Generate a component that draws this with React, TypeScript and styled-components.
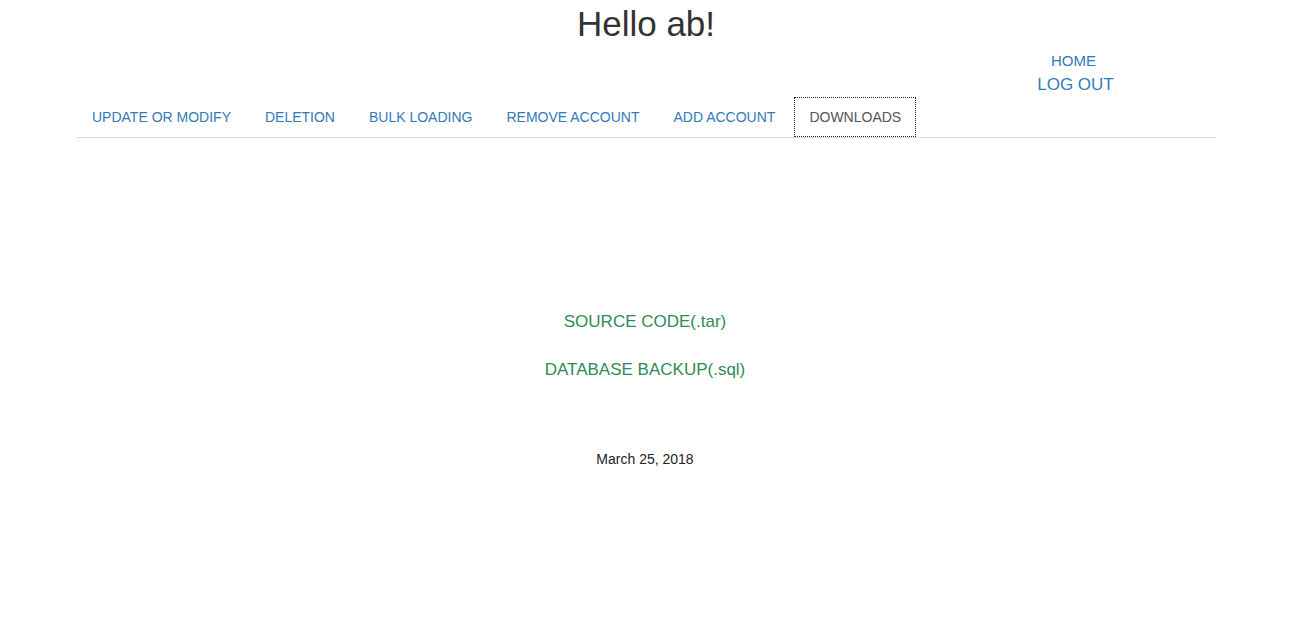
import styled, { createGlobalStyle } from "styled-components";

const GlobalStyle = createGlobalStyle`
  html, body {
    margin: 0;
    padding: 0;
    background: #fff;
  }
  body {
    font-family: "Liberation Sans", Arial, Helvetica, sans-serif;
    font-size: 14px;
    line-height: 1.42857;
    color: #333;
  }
`;

const tabs = [
  "UPDATE OR MODIFY",
  "DELETION",
  "BULK LOADING",
  "REMOVE ACCOUNT",
  "ADD ACCOUNT",
  "DOWNLOADS",
];

const App = () => (
  <>
    <GlobalStyle />
    <Container>
      <Title>Hello ab!</Title>
      <HeaderRow>
        <UserMenu>
          <HomeLink href="#">HOME</HomeLink>
          <LogOutLink href="#">LOG OUT</LogOutLink>
        </UserMenu>
      </HeaderRow>
      <Tabs>
        {tabs.map((t) => (
          <TabItem key={t}>
            <TabLink href="#" $active={t === "DOWNLOADS"}>
              {t}
            </TabLink>
          </TabItem>
        ))}
      </Tabs>
    </Container>

    <Content>
      <DownloadLink href="#">SOURCE CODE(.tar)</DownloadLink>
      <DownloadLink href="#" $gap>
        DATABASE BACKUP(.sql)
      </DownloadLink>
      <DateLine>March 25, 2018</DateLine>
    </Content>
  </>
);

const Container = styled.div`
  width: 1140px;
  margin: 0 auto;
  padding: 0 14px 0 16px;
`;

const Title = styled.h1`
  margin: 4px 0 0;
  font-size: 35px;
  font-weight: 500;
  line-height: 39px;
  text-align: center;
  color: #333;
`;

const HeaderRow = styled.div`
  display: flex;
  justify-content: flex-end;
  padding-top: 7px;
  padding-right: 66px;
`;

const UserMenu = styled.div`
  width: 150px;
  display: flex;
  flex-direction: column;
  align-items: center;
`;

const HomeLink = styled.a`
  font-size: 15px;
  line-height: 22px;
  padding: 0 3px 2px 0;
  color: #337ab7;
  text-decoration: none;
`;

const LogOutLink = styled.a`
  font-size: 17px;
  line-height: 22px;
  padding-left: 1px;
  color: #337ab7;
  text-decoration: none;
`;

const Tabs = styled.ul`
  display: flex;
  list-style: none;
  margin: 0;
  padding: 0;
  border-bottom: 1px solid #ddd;
`;

const TabItem = styled.li`
  margin-bottom: -1px;
`;

const TabLink = styled.a<{ $active?: boolean }>`
  display: block;
  margin-right: 2px;
  padding: 10px 15px;
  line-height: 20px;
  font-size: 14px;
  border: 1px solid transparent;
  text-decoration: none;
  color: ${({ $active }) => ($active ? "#555" : "#337ab7")};
  outline: ${({ $active }) => ($active ? "1px dotted #222" : "none")};
  outline-offset: -2px;
`;

const Content = styled.main`
  display: flex;
  flex-direction: column;
  align-items: center;
  padding-top: 174px;
`;

const DownloadLink = styled.a<{ $gap?: boolean }>`
  display: block;
  margin-top: ${({ $gap }) => ($gap ? "28px" : "0")};
  font-size: 17px;
  line-height: 20px;
  color: #2e8b57;
  text-decoration: none;
`;

const DateLine = styled.p`
  margin: 69px 0 0;
  font-size: 14px;
  line-height: 20px;
  color: #222;
`;

export default App;
